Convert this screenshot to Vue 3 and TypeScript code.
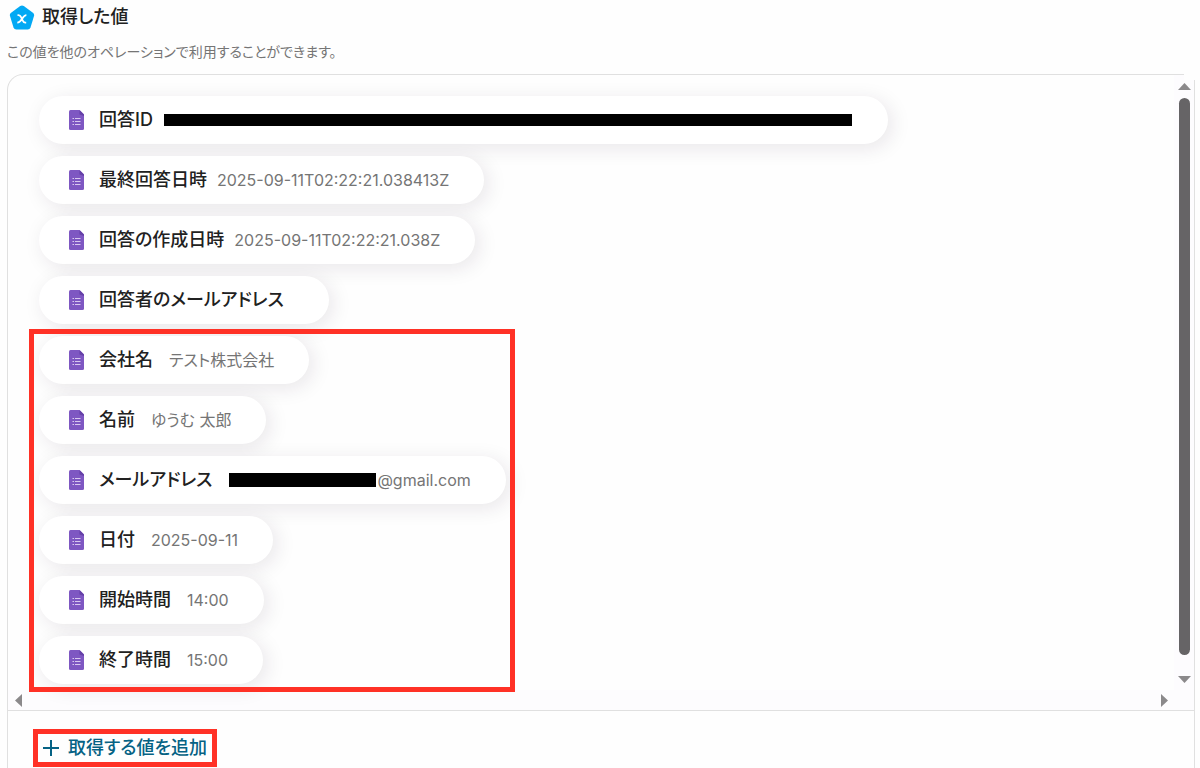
<script setup lang="ts">
interface Item {
  label: string
  value?: string
  mask?: 'long' | 'short'
}

const systemItems: Item[] = [
  { label: '回答ID', mask: 'long' },
  { label: '最終回答日時', value: '2025-09-11T02:22:21.038413Z' },
  { label: '回答の作成日時', value: '2025-09-11T02:22:21.038Z' },
  { label: '回答者のメールアドレス' },
]

const answerItems: Item[] = [
  { label: '会社名', value: 'テスト株式会社' },
  { label: '名前', value: 'ゆうむ 太郎' },
  { label: 'メールアドレス', value: '@gmail.com', mask: 'short' },
  { label: '日付', value: '2025-09-11' },
  { label: '開始時間', value: '14:00' },
  { label: '終了時間', value: '15:00' },
]

const groups = [
  { name: 'system', items: systemItems },
  { name: 'answers', items: answerItems },
]
</script>

<template>
  <main class="page">
    <header class="head">
      <svg class="logo" viewBox="0 0 26 26" aria-hidden="true">
        <path d="M11.2 1.1Q13 -.1 14.8 1.1L23.9 7.7Q25.6 9 25 11L21.5 22.500Q20.800 24.500 18.700 24.500H7.300Q5.200 24.500 4.500 22.500L1 11Q.4 9 2.100 7.700Z" fill="#03a9f4" />
        <path d="M8.500 10.200H9.500C11 10.200 11.600 11 12.200 12.300L13.600 15.400C14.200 16.800 14.700 17.600 16.200 17.600H17.200M17.400 10.200C15.400 10.200 14.300 12 13 14S10.500 17.600 8.300 17.600" fill="none" stroke="#fff" stroke-width="1.800" />
      </svg>
      <h1>取得した値</h1>
    </header>
    <p class="desc">この値を他のオペレーションで利用することができます。</p>

    <section class="panel">
      <div class="viewport">
        <div class="content">
          <ul v-for="g in groups" :key="g.name" class="group" :class="g.name">
            <li v-for="item in g.items" :key="item.label" class="pill">
              <svg class="doc" viewBox="0 0 16 20" aria-hidden="true">
                <path d="M1.500 0H10.500L15 4.500V18.500Q15 20 13.500 20H1.500Q0 20 0 18.500V1.500Q0 0 1.500 0Z" fill="#7e57c2" />
                <path d="M10.500 0L15 4.500V6L10.500 4.500Z" fill="#6540a8" />
                <path d="M3.500 8.500H5M3.500 11.500H5M3.500 14.500H5M6 8.500H11.500M6 11.500H11.500M6 14.500H11.500" stroke="#d9c8f0" stroke-width="1.200" />
              </svg>
              <span class="label">{{ item.label }}</span>
              <span class="value">
                <span v-if="item.mask" class="mask" :class="item.mask"></span>{{ item.value }}
              </span>
            </li>
          </ul>
        </div>
        <div class="vbar" aria-hidden="true">
          <svg class="arrow" viewBox="0 0 13 7"><path d="M0 7L6.500 0L13 7Z" /></svg>
          <div class="thumb"></div>
          <svg class="arrow" viewBox="0 0 13 7"><path d="M0 0L6.500 7L13 0Z" /></svg>
        </div>
        <div class="hbar" aria-hidden="true">
          <svg class="side" viewBox="0 0 7 13"><path d="M7 0L0 6.500L7 13Z" /></svg>
          <svg class="side" viewBox="0 0 7 13"><path d="M0 0L7 6.500L0 13Z" /></svg>
        </div>
      </div>
      <footer class="foot">
        <button type="button" class="add">
          <svg class="plus" viewBox="0 0 16 16" aria-hidden="true"><path d="M8 0V16M0 8H16" stroke="#056284" stroke-width="2" /></svg>
          取得する値を追加
        </button>
      </footer>
    </section>
  </main>
</template>

<style>
body {
  background: #fefefe;
  overflow: hidden;
}
</style>

<style scoped>
.page {
  box-sizing: border-box;
  height: 100vh;
  display: flex;
  flex-direction: column;
  padding: 0 5px 0 7px;
  font-family: Inter, "Noto Sans CJK JP", sans-serif;
  font-feature-settings: "palt";
  color: #212121;
}
.head {
  display: flex;
  align-items: center;
  gap: 7px;
  height: 36px;
  padding-left: 2px;
}
.logo {
  width: 26px;
  height: 26px;
}
h1 {
  margin: 0;
  font-size: 18px;
  line-height: 24px;
  font-weight: 500;
  padding-bottom: 2px;
}
.desc {
  margin: 6px 0 12px;
  font-size: 14px;
  line-height: 20px;
  color: #757575;
}
.panel {
  position: relative;
  flex: 1;
  display: flex;
  flex-direction: column;
  border: 1px solid #e0e0e0;
  border-bottom: 0;
  border-radius: 16px 0 0 0;
}
.panel::after {
  content: "";
  position: absolute;
  top: -1px;
  right: -1px;
  width: 11px;
  height: 6px;
  background: #fefefe;
}
.viewport {
  display: grid;
  grid-template-columns: 1fr 20px;
  grid-template-rows: auto 20px;
  border-bottom: 1px solid #e0e0e0;
}
.content {
  padding: 21px 31px 6px;
}
.group {
  position: relative;
  display: flex;
  flex-direction: column;
  align-items: flex-start;
  gap: 12px;
  margin: 0;
  padding: 0;
  list-style: none;
}
.answers {
  margin-top: 12px;
}
.answers::after {
  content: "";
  position: absolute;
  top: -7px;
  left: -10px;
  bottom: -8px;
  width: 476px;
  border: 5px solid #ff3126;
}
.pill {
  display: flex;
  align-items: center;
  box-sizing: border-box;
  height: 48px;
  padding: 0 35px 0 30px;
  border-radius: 24px;
  background: #fff;
  box-shadow: 4px 4px 20px rgba(40, 20, 50, 0.1);
}
.doc {
  width: 16px;
  height: 20px;
  margin-right: 14px;
}
.label {
  font-size: 18px;
  line-height: 24px;
  font-weight: 500;
}
.value {
  display: flex;
  align-items: center;
  margin-left: 10px;
  font-size: 16px;
  line-height: 20px;
  color: #757575;
}
.answers .value {
  margin-left: 16px;
}
.mask {
  margin: 0 1px;
  background: #000;
}
.long {
  width: 688px;
  height: 12px;
}
.short {
  width: 147px;
  height: 14px;
}
.vbar {
  grid-row: 1 / 3;
  grid-column: 2;
  display: flex;
  flex-direction: column;
  align-items: center;
  gap: 8px;
  padding: 8px 0 27px;
  background: #fdfcfe;
}
.thumb {
  flex: 1;
  width: 11px;
  border-radius: 6px;
  background: #666466;
}
.arrow {
  width: 13px;
  height: 7px;
  fill: #8b898b;
}
.vbar .arrow:last-child {
  margin-top: 13px;
}
.hbar {
  display: flex;
  justify-content: space-between;
  align-items: center;
  padding: 0 6px 0 7px;
  background: #fdfcfe;
}
.side {
  width: 7px;
  height: 13px;
  fill: #8b898b;
}
.foot {
  padding: 18px 25px 0;
}
.add {
  display: flex;
  align-items: center;
  gap: 9px;
  height: 38px;
  padding: 0 5px;
  border: 5px solid #ff3126;
  background: transparent;
  color: #056284;
  font-family: inherit;
  font-feature-settings: inherit;
  font-size: 18px;
  line-height: 24px;
  font-weight: 500;
}
.plus {
  width: 16px;
  height: 16px;
}
</style>
